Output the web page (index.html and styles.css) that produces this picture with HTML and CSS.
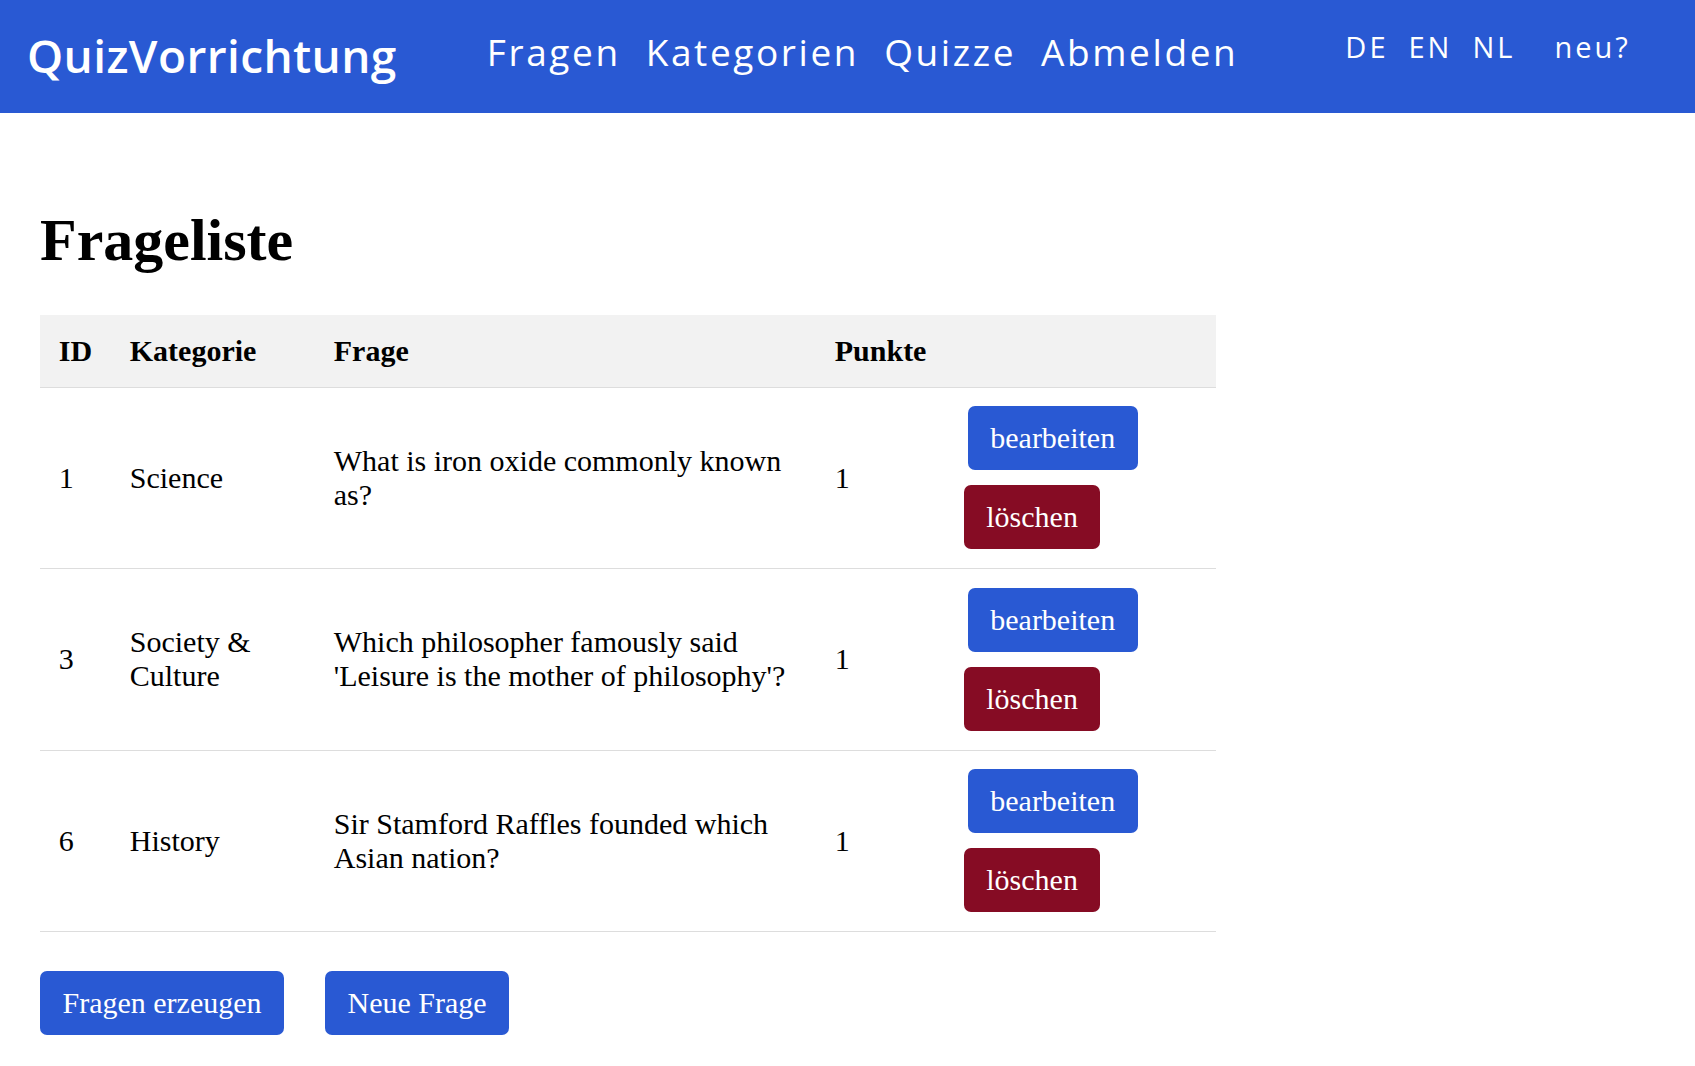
FILE: index.html
```html
<!DOCTYPE html>
<html lang="de">
<head>
<meta charset="utf-8">
<title>Frageliste</title>
<link rel="stylesheet" href="styles.css">
</head>
<body>
<header class="topbar">
  <a class="brand" href="#">QuizVorrichtung</a>
  <nav class="mainnav">
    <a href="#">Fragen</a>
    <a href="#">Kategorien</a>
    <a href="#">Quizze</a>
    <a href="#">Abmelden</a>
  </nav>
  <div class="lang">
    <a href="#">DE</a>
    <a href="#">EN</a>
    <a href="#">NL</a>
    <a class="neu" href="#">neu?</a>
  </div>
</header>
<main class="content">
  <h1 class="title">Frageliste</h1>
  <table class="qtable">
    <colgroup>
      <col class="c-id"><col class="c-kat"><col class="c-frage"><col class="c-punkte"><col class="c-act">
    </colgroup>
    <thead>
      <tr><th>ID</th><th>Kategorie</th><th>Frage</th><th>Punkte</th><th></th></tr>
    </thead>
    <tbody>
      <tr>
        <td>1</td><td>Science</td><td>What is iron oxide commonly known as?</td><td>1</td>
        <td><div class="btns"><a class="btn btn-edit" href="#">bearbeiten</a><button class="btn btn-del">löschen</button></div></td>
      </tr>
      <tr>
        <td>3</td><td>Society &amp; Culture</td><td>Which philosopher famously said 'Leisure is the mother of philosophy'?</td><td>1</td>
        <td><div class="btns"><a class="btn btn-edit" href="#">bearbeiten</a><button class="btn btn-del">löschen</button></div></td>
      </tr>
      <tr>
        <td>6</td><td>History</td><td>Sir Stamford Raffles founded which Asian nation?</td><td>1</td>
        <td><div class="btns"><a class="btn btn-edit" href="#">bearbeiten</a><button class="btn btn-del">löschen</button></div></td>
      </tr>
    </tbody>
  </table>
  <div class="bottom-actions">
    <a class="btn" href="#">Fragen erzeugen</a>
    <a class="btn" href="#">Neue Frage</a>
  </div>
</main>
</body>
</html>
```
FILE: styles.css
```css
html, body {
  margin: 0;
  padding: 0;
  background: #ffffff;
}
body {
  font-family: "Liberation Serif", "Times New Roman", serif;
  font-size: 30px;
  color: #000;
}
a { text-decoration: none; }

.topbar {
  background: #2959d3;
  height: 113px;
  display: flex;
  align-items: flex-start;
  font-family: "Open Sans", "Liberation Sans", sans-serif;
  color: #fff;
  box-sizing: border-box;
}
.topbar a { color: #fff; }
.brand {
  margin-left: 27px;
  margin-top: 25px;
  font-size: 46px;
  line-height: 60px;
  font-weight: 600;
  letter-spacing: 0.4px;
}
.mainnav {
  display: flex;
  gap: 25px;
  margin-left: 90px;
  margin-top: 27px;
}
.mainnav a {
  font-size: 37px;
  line-height: 50px;
  letter-spacing: 2.6px;
}
.lang {
  display: flex;
  gap: 20px;
  margin-left: 107px;
  margin-top: 27px;
}
.lang a {
  font-size: 29px;
  line-height: 40px;
  letter-spacing: 3px;
}
.lang .neu { margin-left: 19px; }

.content {
  padding: 53px 0 0 40px;
}
.title {
  font-size: 60px;
  font-weight: bold;
  margin: 40px 0;
  line-height: 69px;
}
.qtable {
  width: 1176px;
  border-collapse: collapse;
  table-layout: fixed;
}
.c-id { width: 71px; }
.c-kat { width: 204px; }
.c-frage { width: 501px; }
.c-punkte { width: 129px; }
.c-act { width: 271px; }
.qtable th {
  background: #f2f2f2;
  text-align: left;
  font-weight: bold;
  padding: 18.75px;
  border-bottom: 1px solid #dddddd;
}
.qtable td {
  padding: 18.75px;
  vertical-align: middle;
  border-bottom: 1px solid #dddddd;
}
.btns {
  display: flex;
  flex-direction: column;
  align-items: flex-start;
  gap: 15px;
}
.btn {
  display: inline-block;
  font-family: "Liberation Serif", "Times New Roman", serif;
  font-size: 30px;
  line-height: 34px;
  padding: 15px 22.5px;
  border: none;
  border-radius: 7px;
  background: #2959d3;
  color: #fff;
  cursor: pointer;
}
.btn-edit { margin-left: 4px; }
.btn-del { background: #860c24; }
.bottom-actions {
  display: flex;
  gap: 41px;
  margin-top: 39px;
}
```
